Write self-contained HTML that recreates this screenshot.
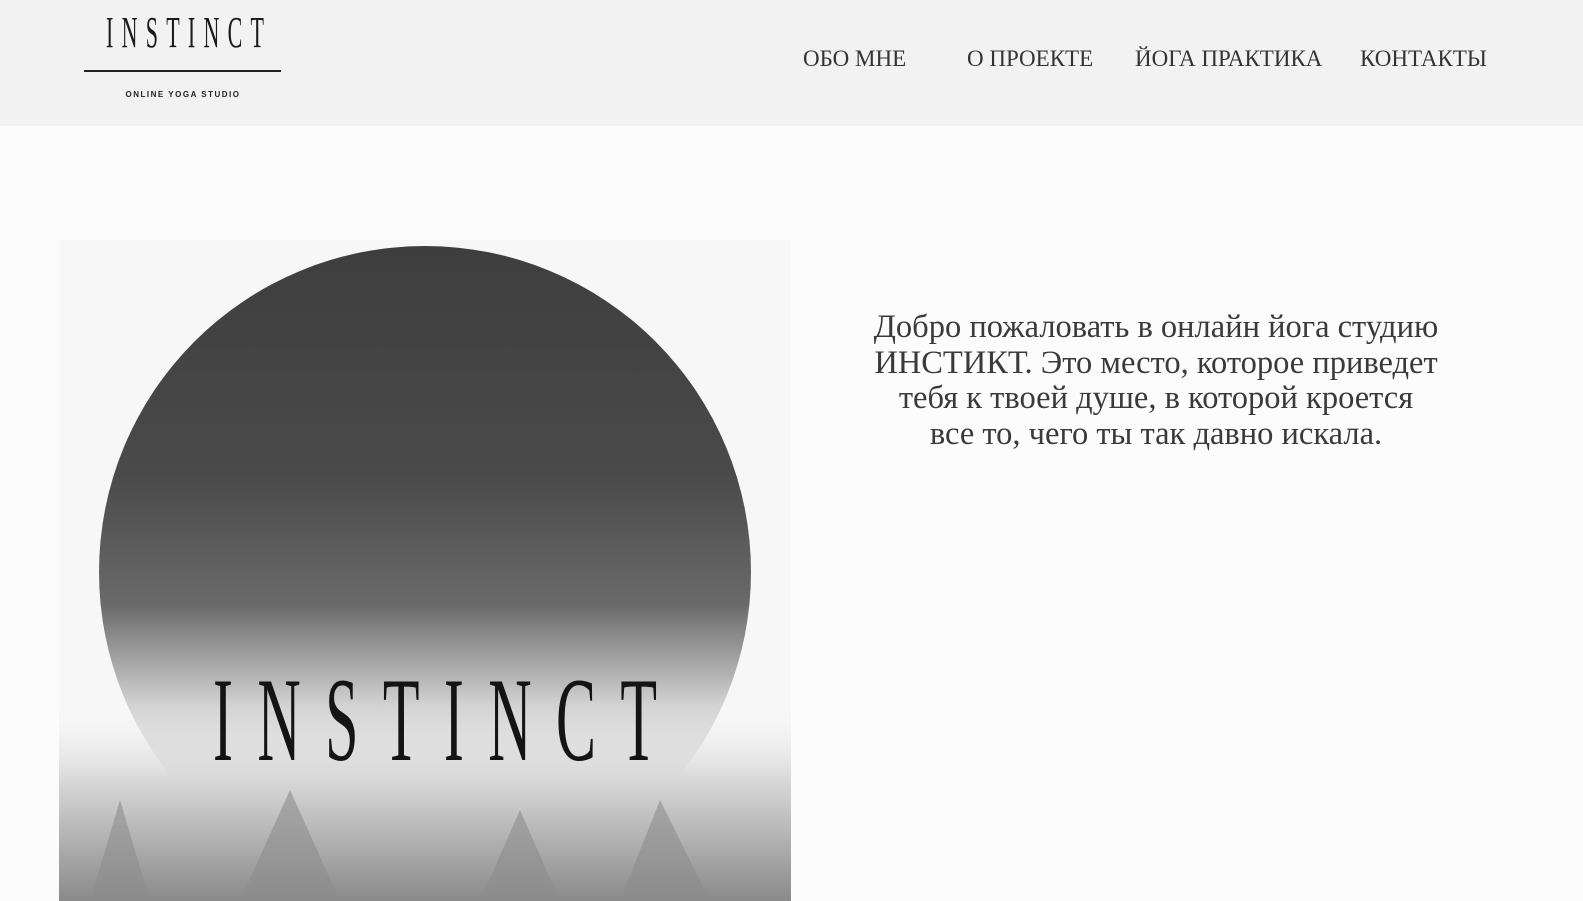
<!DOCTYPE html>
<html><head><meta charset="utf-8"><style>
*{margin:0;padding:0;box-sizing:border-box}
body{width:1583px;height:901px;overflow:hidden;background:#fcfcfc;font-family:"Liberation Serif",serif;position:relative}
.hdr{position:absolute;left:0;top:0;width:1583px;height:126px;background:#f2f2f2}
.nav{position:absolute;top:46px;font-size:23px;color:#333;white-space:nowrap}
.txt{position:absolute;left:806px;width:700px;top:310px;text-align:center;font-size:32.5px;line-height:35.5px;color:#3a3a3a;white-space:nowrap}
</style></head><body>
<div class="hdr">
<svg width="320" height="126" style="position:absolute;left:0;top:0">
<text transform="translate(106,47) scale(0.5,1)" x="0" y="0" font-family="Liberation Serif" font-size="44" textLength="316" lengthAdjust="spacing" fill="#1a1a1a">INSTINCT</text>
<rect x="84" y="70" width="197" height="2" fill="#222"/>
<text x="183" y="97" text-anchor="middle" font-family="Liberation Sans" font-weight="bold" font-size="8" letter-spacing="1.5" fill="#222">ONLINE YOGA STUDIO</text>
</svg>
<div class="nav" style="left:803px">ОБО МНЕ</div>
<div class="nav" style="left:967px">О ПРОЕКТЕ</div>
<div class="nav" style="left:1135px">ЙОГА ПРАКТИКА</div>
<div class="nav" style="left:1360px">КОНТАКТЫ</div>
</div>
<svg width="1583" height="901" style="position:absolute;left:0;top:0">
<defs>
<linearGradient id="c" x1="0" y1="0" x2="0" y2="1">
<stop offset="0" stop-color="#3e3e3e"/><stop offset="0.35" stop-color="#4a4a4a"/><stop offset="0.55" stop-color="#6a6a6a"/><stop offset="0.7" stop-color="#cfcfcf"/><stop offset="1" stop-color="#e8e8e8"/>
</linearGradient>
<linearGradient id="b" x1="0" y1="0" x2="0" y2="1">
<stop offset="0" stop-color="#fafafa" stop-opacity="0"/><stop offset="0.4" stop-color="#d8d8d8"/><stop offset="1" stop-color="#8a8a8a"/>
</linearGradient>
</defs>
<rect x="59" y="240" width="732" height="661" fill="#f7f7f7"/>
<circle cx="425" cy="572" r="326" fill="url(#c)"/>
<rect x="59" y="700" width="732" height="201" fill="url(#b)"/>
<path d="M90 901 L120 800 L150 901 M240 901 L290 790 L340 901 M480 901 L520 810 L560 901 M620 901 L660 800 L710 901" fill="#8c8c8c" opacity="0.6"/>
<text transform="translate(213,760) scale(0.5,1)" x="0" y="0" font-family="Liberation Serif" font-size="120" textLength="888" lengthAdjust="spacing" fill="#141414">INSTINCT</text>
</svg>
<div class="txt">Добро пожаловать в онлайн йога студию<br>ИНСТИКТ. Это место, которое приведет<br>тебя к твоей душе, в которой кроется<br>все то, чего ты так давно искала.</div>
</body></html>
